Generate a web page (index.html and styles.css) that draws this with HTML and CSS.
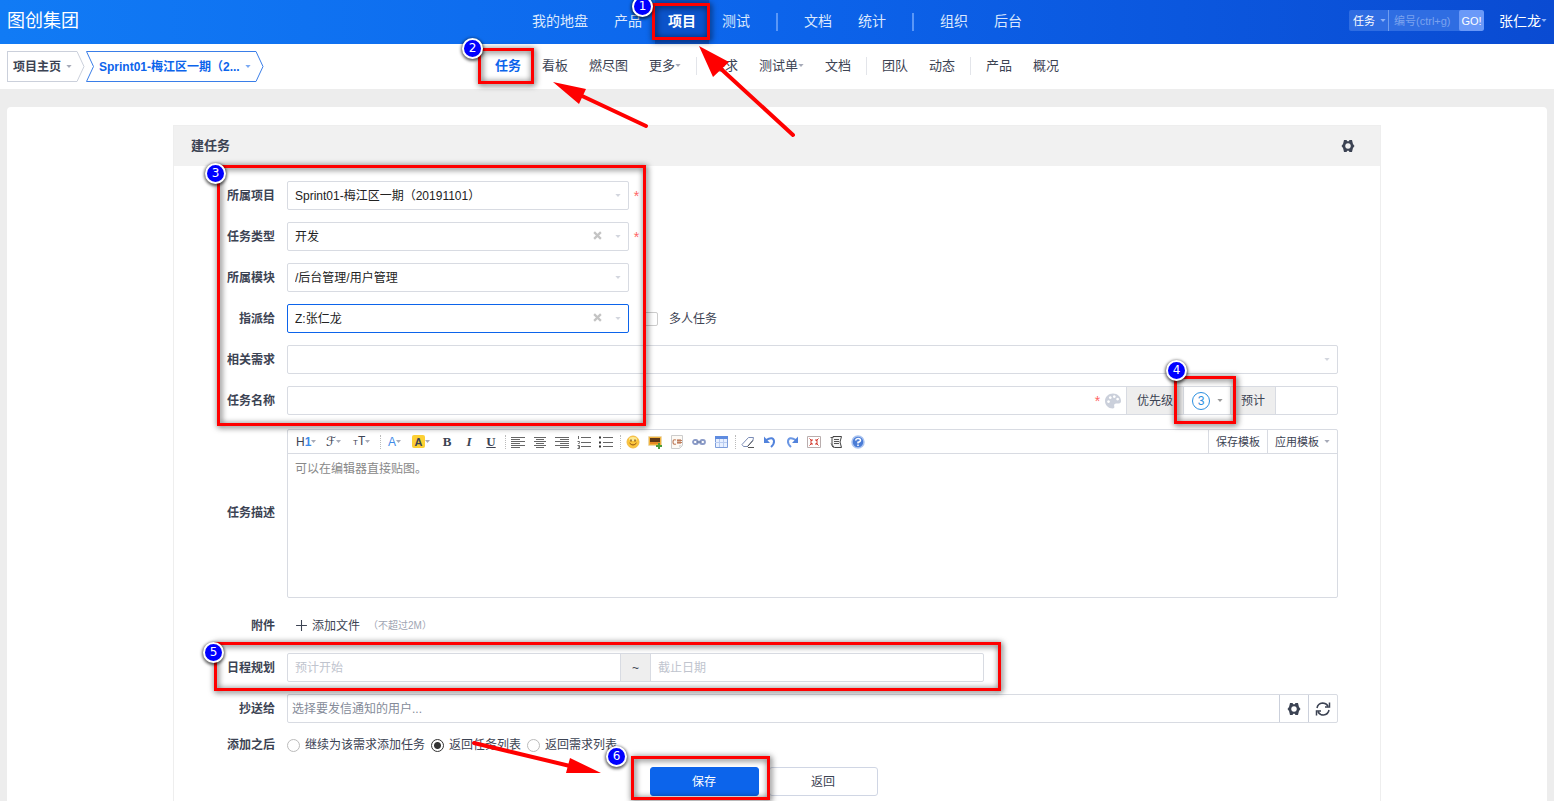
FILE: index.html
```html
<!DOCTYPE html>
<html lang="zh-CN">
<head>
<meta charset="utf-8">
<title>建任务</title>
<link rel="stylesheet" href="styles.css">
</head>
<body>
<svg class="defs" aria-hidden="true">
  <symbol id="caret" viewBox="0 0 7 4"><path d="M0 0h7L3.500 4z" fill="currentColor"/></symbol>
  <symbol id="gear" viewBox="0 0 14 14"><path fill="currentColor" fill-rule="evenodd" d="M3 1h2.500l.8 1.200h1.400L8.500 1H11l.6 2.400.4 1.600L13.500 7 12 9l-.4 1.600L11 13H8.500l-.8-1.200H6.300L5.500 13H3l-.6-2.400L2 9 .5 7 2 5l.4-1.600zM7 4.200a2.800 2.800 0 1 0 .01 0z"/></symbol>
</svg>

<header class="topbar">
  <h1 class="brand">图创集团</h1>
  <nav class="topnav">
    <a href="#">我的地盘</a>
    <a href="#">产品</a>
    <a href="#" class="active">项目</a>
    <a href="#">测试</a>
    <i class="rule"></i>
    <a href="#">文档</a>
    <a href="#">统计</a>
    <i class="rule"></i>
    <a href="#">组织</a>
    <a href="#">后台</a>
  </nav>
  <div class="tools">
    <form class="search">
      <select aria-label="搜索类型"><option>任务</option></select>
      <svg class="caret"><use href="#caret"/></svg>
      <input type="text" aria-label="编号" placeholder="编号(ctrl+g)">
      <button type="button">GO!</button>
    </form>
    <a href="#" class="user">张仁龙<svg class="caret"><use href="#caret"/></svg></a>
  </div>
</header>

<div class="subbar">
  <div class="crumbs">
    <a href="#" class="crumb">
      <span class="crumb-body first">项目主页<svg class="caret"><use href="#caret"/></svg></span>
      <svg class="crumb-end" viewBox="0 0 8 31"><path d="M0 .5L7 15.500L0 30.500"/></svg>
    </a>
    <a href="#" class="crumb current">
      <svg class="crumb-end" viewBox="0 0 8 31"><path d="M8 .5H.5L7.500 15.500L.5 30.500H8"/></svg>
      <span class="crumb-body">Sprint01-梅江区一期（2...<svg class="caret"><use href="#caret"/></svg></span>
      <svg class="crumb-end" viewBox="0 0 8 31"><path d="M0 .5L7 15.500L0 30.500"/></svg>
    </a>
  </div>
  <nav class="subnav">
    <a href="#" class="active">任务</a>
    <a href="#">看板</a>
    <a href="#">燃尽图</a>
    <a href="#">更多<svg class="caret"><use href="#caret"/></svg></a>
    <i class="rule"></i>
    <a href="#">需求</a>
    <a href="#">测试单<svg class="caret"><use href="#caret"/></svg></a>
    <a href="#">文档</a>
    <i class="rule"></i>
    <a href="#">团队</a>
    <a href="#">动态</a>
    <i class="rule"></i>
    <a href="#">产品</a>
    <a href="#">概况</a>
  </nav>
</div>

<main class="page">
  <section class="panel">
    <header class="panel-head">
      <h2>建任务</h2>
      <button type="button" class="icon-btn" aria-label="设置"><svg class="gear"><use href="#gear"/></svg></button>
    </header>
    <form class="form">
      <label for="project">所属项目</label>
      <div class="line">
        <div class="box third"><select id="project"><option>Sprint01-梅江区一期（20191101）</option></select><svg class="caret"><use href="#caret"/></svg></div>
        <span class="star">*</span>
      </div>

      <label for="type">任务类型</label>
      <div class="line">
        <div class="box third"><select id="type"><option>开发</option></select><button type="button" class="clear" aria-label="清除"><svg viewBox="0 0 8 8"><path d="M1 1l6 6M7 1L1 7"/></svg></button><svg class="caret"><use href="#caret"/></svg></div>
        <span class="star">*</span>
      </div>

      <label for="module">所属模块</label>
      <div class="line">
        <div class="box third"><select id="module"><option>/后台管理/用户管理</option></select><svg class="caret"><use href="#caret"/></svg></div>
      </div>

      <label for="assigned">指派给</label>
      <div class="line">
        <div class="box third focus"><select id="assigned"><option>Z:张仁龙</option></select><button type="button" class="clear" aria-label="清除"><svg viewBox="0 0 8 8"><path d="M1 1l6 6M7 1L1 7"/></svg></button><svg class="caret"><use href="#caret"/></svg></div>
        <label class="multi"><input type="checkbox">多人任务</label>
      </div>

      <label for="story">相关需求</label>
      <div class="line">
        <div class="box grow"><select id="story"><option></option></select><svg class="caret"><use href="#caret"/></svg></div>
      </div>

      <label for="name">任务名称</label>
      <div class="box group">
        <input type="text" id="name">
        <span class="star">*</span>
        <button type="button" class="palette" aria-label="颜色"><svg viewBox="0 0 16 16"><path fill="#cbd0db" fill-rule="evenodd" d="M8 0.500C3.500.5 0 3.800 0 8c0 4.300 3.500 7.500 7.600 7.500 1.400 0 2-.9 1.700-2-.5-1.700.2-3 2-3h2.500c1.500 0 2.200-1 2.200-2.500C16 3.800 12.500.5 8 .5zM3.500 7.200a1.400 1.400 0 1 0 .01 0zM5.300 3.200a1.400 1.400 0 1 0 .01 0zM9.300 2.200a1.400 1.400 0 1 0 .01 0zM12.600 4.700a1.400 1.400 0 1 0 .01 0z"/></svg></button>
        <label class="addon" for="pri">优先级</label>
        <span class="pri"><select id="pri"><option>3</option></select><svg class="caret"><use href="#caret"/></svg></span>
        <label class="addon" for="estimate">预计</label>
        <input type="text" id="estimate" class="estimate">
      </div>

      <label for="desc">任务描述</label>
      <div class="editor">
        <div class="toolbar">
          <div class="icons">
            <button type="button" class="w24" aria-label="标题"><span>H<b class="blue">1</b></span><svg class="caret"><use href="#caret"/></svg></button>
            <button type="button" class="w21" aria-label="字体"><span class="script">ℱ</span><svg class="caret"><use href="#caret"/></svg></button>
            <button type="button" class="w21" aria-label="字号"><span><small>T</small>T</span><svg class="caret"><use href="#caret"/></svg></button>
            <i class="dots"></i>
            <button type="button" class="w21 color" aria-label="文字颜色"><span class="blue">A</span><svg class="caret"><use href="#caret"/></svg></button>
            <button type="button" class="w21" aria-label="背景色"><span class="mark">A</span><svg class="caret"><use href="#caret"/></svg></button>
            <button type="button" aria-label="粗体"><b class="serif">B</b></button>
            <button type="button" aria-label="斜体"><b class="serif italic">I</b></button>
            <button type="button" aria-label="下划线"><b class="serif under">U</b></button>
            <i class="dots"></i>
            <button type="button" aria-label="左对齐"><svg viewBox="0 0 16 16"><path class="ink" d="M1 3.500h14M1 5.500h9M1 7.500h14M1 9.500h9M1 11.500h14M1 13.500h9"/></svg></button>
            <button type="button" aria-label="居中"><svg viewBox="0 0 16 16"><path class="ink" d="M2 3.500h12M4 5.500h8M2 7.500h12M4 9.500h8M2 11.500h12M4 13.500h8"/></svg></button>
            <button type="button" aria-label="右对齐"><svg viewBox="0 0 16 16"><path class="ink" d="M1 3.500h14M6 5.500h9M1 7.500h14M6 9.500h9M1 11.500h14M6 13.500h9"/></svg></button>
            <button type="button" aria-label="编号列表"><svg viewBox="0 0 16 16"><path class="ink" d="M5 3.500h10M5 8.500h10M5 12.500h10M2.500 2v3M1.500 7.500h2v1l-1 1h1M1.500 11.500h2v3h-2M2 13h1.500"/></svg></button>
            <button type="button" aria-label="项目列表"><svg viewBox="0 0 16 16"><path class="ink" d="M5 3.500h10M5 8.500h10M5 12.500h10"/><path fill="#333" d="M1 2.500h2v2H1zM1 7.500h2v2H1zM1 11.500h2v2H1z"/></svg></button>
            <i class="dots"></i>
            <button type="button" aria-label="表情"><svg viewBox="0 0 16 16"><circle cx="8" cy="8" r="6" fill="#fbc53b" stroke="#f3bb45"/><ellipse cx="8" cy="5" rx="4" ry="2" fill="#fde993"/><path d="M6 5.500v2M10 5.500v2" stroke="#7a4a10" stroke-width="1.300"/><path d="M4.500 9q3.500 4 7 0" fill="none" stroke="#8e4f12"/></svg></button>
            <button type="button" aria-label="图片"><svg viewBox="0 0 16 16"><path fill="#f3b43f" d="M2 3h12v9H2z"/><path fill="#5e3918" d="M3 4h10v4H3z"/><path fill="#e58a24" d="M3 8h10v2H3z"/><path fill="none" stroke="#ecd9ae" d="M1.500 2.500h13v9h-13z"/><path stroke="#4b9c39" stroke-width="2" d="M9 12h6M12 9v6"/></svg></button>
            <button type="button" aria-label="代码"><svg viewBox="0 0 16 16"><path fill="#fdfaf5" stroke="#ccc" d="M2.500 1.500h11v10l-3 3h-8z"/><path fill="none" stroke="#bf7c5b" stroke-width="1.200" d="M7 6q-3-1-3 2t3 2M9 5v5M11 5v5M8 6.500h5M8 8.500h5"/><path fill="#ddd" d="M10 14v-3h3z"/></svg></button>
            <button type="button" aria-label="链接"><svg viewBox="0 0 16 16"><g fill="none" stroke="#8c9cc8" stroke-width="1.800"><rect x="2" y="6" width="5" height="4" rx="2"/><rect x="9" y="6" width="5" height="4" rx="2"/></g><path stroke="#62749f" d="M5 8h6"/></svg></button>
            <button type="button" aria-label="表格"><svg viewBox="0 0 16 16"><path fill="#e8f0ff" stroke="#7d9ddb" d="M2.500 2.500h12v11h-12z"/><path fill="#5f8ce0" d="M2 2h13v3H2z"/><path stroke="#b9ccf0" d="M2 8.500h12M6.500 5v8M10.500 5v8"/></svg></button>
            <i class="dots"></i>
            <button type="button" aria-label="清除格式"><svg viewBox="0 0 16 16"><path fill="#fff" stroke="#7b8cb6" d="M2 10.500L8.500 3.500h5L13 6l-5.500 6.500H3.500z"/><path stroke="#555" d="M8 13.500h6M7.500 12.500L13 6.500"/></svg></button>
            <button type="button" aria-label="撤销"><svg viewBox="0 0 16 16"><path fill="none" stroke="#5283dc" stroke-width="2" d="M4 6q7-4 8 1 .4 3-3 6"/><path fill="#5283dc" d="M2 2.500v6.500h6z"/></svg></button>
            <button type="button" aria-label="重做"><svg viewBox="0 0 16 16"><path fill="none" stroke="#6b97e4" stroke-width="2" d="M12 6Q5 2 4 7q-.4 3 3 6"/><path fill="#5283dc" d="M14 2.500v6.500H8z"/></svg></button>
            <button type="button" aria-label="全屏"><svg viewBox="0 0 16 16"><path fill="#fff" stroke="#b9aeae" d="M1.500 2.500h13v11h-13z"/><path stroke="#d33c30" fill="none" d="M3.500 4.500L6 7M12.500 4.500L10 7M3.500 11.500L6 9M12.500 11.500L10 9M6 5v2H4M10 5v2h2M6 11V9H4M10 11V9h2"/></svg></button>
            <button type="button" aria-label="源码"><svg viewBox="0 0 16 16"><path fill="#f5f5f5" stroke="#444" d="M4 4.500l1-2h8.500L12 8l1.500 5.500h-7q-2 0-2.500-2z"/><path stroke="#555" fill="none" d="M2.500 3.500h3M6 5.500h5M6 7.500h5M6 9.500h5M3 9.500l3 3.500"/></svg></button>
            <button type="button" aria-label="关于"><svg viewBox="0 0 16 16"><circle cx="8" cy="8" r="6" fill="#4a7cd6" stroke="#a9c3f0" stroke-width="1.500"/><path fill="none" stroke="#fff" stroke-width="1.500" d="M5.500 6.500q.5-2 2.500-2 2.500 0 2.500 1.800Q10.500 8 8 8.200v1.300M8 10.500V12"/></svg></button>
          </div>
          <button type="button" class="tpl">保存模板</button>
          <button type="button" class="tpl">应用模板<svg class="caret"><use href="#caret"/></svg></button>
        </div>
        <textarea id="desc" placeholder="可以在编辑器直接贴图。"></textarea>
      </div>

      <label for="file">附件</label>
      <div class="line attach">
        <button type="button" id="file" class="add"><svg viewBox="0 0 12 12"><path d="M6 1v10M1 6h10"/></svg>添加文件</button>
        <small>（不超过2M）</small>
      </div>

      <label for="begin">日程规划</label>
      <div class="box dates">
        <input type="text" id="begin" placeholder="预计开始">
        <span class="addon tilde">~</span>
        <input type="text" aria-label="截止日期" placeholder="截止日期">
      </div>

      <label for="mail">抄送给</label>
      <div class="box mail">
        <input type="text" id="mail" placeholder="选择要发信通知的用户...">
        <button type="button" aria-label="设置"><svg class="gear"><use href="#gear"/></svg></button>
        <button type="button" aria-label="刷新"><svg class="refresh" viewBox="0 0 16 16"><path d="M2 7q.8-4.500 5.500-5 3.500 0 5.500 3M14 9q-.8 4.500-5.500 5-3.500 0-5.500-3M14.500 1.500v4.500H10M1.500 14.500V10H6"/></svg></button>
      </div>

      <span class="caption">添加之后</span>
      <div class="line radios">
        <label><input type="radio" name="after">继续为该需求添加任务</label>
        <label><input type="radio" name="after" checked>返回任务列表</label>
        <label><input type="radio" name="after">返回需求列表</label>
      </div>

      <div class="actions">
        <button type="button" class="primary">保存</button>
        <button type="button">返回</button>
      </div>
    </form>
  </section>
</main>

<div class="notes">
  <div class="frame f1"></div><div class="frame f2"></div><div class="frame f3"></div>
  <div class="frame f4"></div><div class="frame f5"></div><div class="frame f6"></div>
  <svg class="arrows" viewBox="0 0 1554 801">
    <g stroke="#f00" stroke-width="4" stroke-linecap="round"><path d="M720 68L793 135M580 95L646 126M474 743L570 766"/></g>
    <g fill="#f00"><path d="M699 46L729 62L713 77zM553 82L586 89L579 104zM601 773L570 758L566 773z"/></g>
  </svg>
  <span class="badge b1">1</span><span class="badge b2">2</span><span class="badge b3">3</span>
  <span class="badge b4">4</span><span class="badge b5">5</span><span class="badge b6">6</span>
</div>
</body>
</html>
```

FILE: styles.css
```css
* { box-sizing: border-box; }
body {
  margin: 0;
  min-height: 100vh;
  display: flex;
  flex-direction: column;
  position: relative;
  background: #ededed;
  color: #3c4353;
  font: 12px/20px "Liberation Sans", "Noto Sans CJK SC", sans-serif;
}
h1, h2 { margin: 0; font-weight: normal; }
a { color: inherit; text-decoration: none; }
button, input, select, textarea {
  margin: 0;
  padding: 0;
  border: 0;
  background: none;
  color: inherit;
  font: inherit;
  outline: 0;
  min-width: 0;
  border-radius: 0;
}
select { appearance: none; }
.defs { position: absolute; width: 0; height: 0; }
.caret { width: 6px; height: 3px; color: #a6aab8; flex: none; }

/* top bar */
.topbar {
  display: grid;
  grid-template-columns: 1fr auto 1fr;
  align-items: center;
  height: 44px;
  padding: 0 7px;
  background: linear-gradient(90deg, #117bf5, #0c64eb 50%, #0a4bd2);
  color: #fff;
}
.brand { font-size: 18px; line-height: 40px; padding-bottom: 2px; }
.topnav { display: flex; align-items: center; gap: 26px; font-size: 14px; color: #dbe8fd; }
.topnav a { line-height: 42px; padding-bottom: 2px; }
.topnav .active { color: #fff; font-weight: bold; background: #0b53ca; margin: 0 -13px; padding: 0 13px 2px; }
.topnav .rule { width: 2px; height: 18px; background: #5a97f7; }
.tools { display: flex; justify-content: flex-end; align-items: center; gap: 15px; padding-bottom: 3px; }
.search { display: flex; align-items: center; height: 21px; background: #2f6de2; border-radius: 2px; overflow: hidden; }
.search select { width: 30px; padding-left: 4px; font-size: 11px; height: 21px; }
.search .caret { margin: 0 2px 0 1px; color: #8fb2f5; }
.search input { width: 71px; height: 21px; border-left: 1px solid #6f9df0; padding-left: 5px; font-size: 11px; }
.search input::placeholder { color: #7ba2ee; }
.search button { width: 25px; height: 21px; background: #6a99f8; font-size: 11px; border-radius: 2px; }
.user { display: flex; align-items: center; font-size: 14px; }
.user .caret { color: #8fb2f5; }

/* second bar */
.subbar {
  display: grid;
  grid-template-columns: 1fr auto 1fr;
  align-items: center;
  height: 45px;
  padding: 0 7px;
  background: #fff;
}
.crumbs { display: flex; gap: 1px; font-weight: bold; white-space: nowrap; }
.crumb { display: flex; color: #3c4353; }
.crumb-body {
  display: flex;
  align-items: center;
  gap: 5px;
  height: 31px;
  padding: 0 5px;
  border: solid #cbd0db;
  border-width: 1px 0;
}
.crumb-body.first { border-left-width: 1px; }
.crumb-end { width: 8px; height: 31px; fill: none; stroke: #cbd0db; }
.current { color: #0c64eb; }
.current .crumb-body { border-color: #3a7ee8; }
.current .crumb-end { stroke: #3a7ee8; }
.current .caret { color: #7aa9f3; }
.subnav { display: flex; align-items: center; gap: 21px; font-size: 13px; padding-bottom: 2px; }
.subnav a { display: flex; align-items: center; }
.subnav .active { color: #0c64eb; font-weight: bold; }
.subnav .rule { width: 1px; height: 18px; margin: 0 -6px; background: #e3e5ea; }

/* panel */
.page {
  flex: 1;
  display: flex;
  justify-content: center;
  margin: 18px 7px 0;
  padding: 18px 18px 0;
  background: #fff;
  border-radius: 4px 4px 0 0;
}
.panel { width: 100%; max-width: 1208px; border: solid #eee; border-width: 1px 1px 0; }
.panel-head {
  display: flex;
  justify-content: space-between;
  align-items: center;
  height: 40px;
  padding: 0 25px 0 17px;
  background: #f1f1f1;
}
.panel-head h2 { font-size: 13px; font-weight: bold; }
.icon-btn { display: flex; }
.gear { width: 14px; height: 14px; }
.form {
  display: grid;
  grid-template-columns: 101px minmax(0, 1fr);
  gap: 12px;
  align-items: center;
  padding: 15px 42px 0 0;
}
.form > label, .caption { text-align: right; font-weight: bold; }
.line { display: flex; align-items: center; min-height: 29px; }
.box { display: flex; align-items: center; height: 29px; border: 1px solid #d8dbe2; border-radius: 2px; }
.box select, .box input { flex: 1; height: 27px; padding: 0 7px; color: #222; }
.box .caret { margin: 0 7px; color: #d3d6de; }
.third { width: 33%; max-width: 342px; }
.grow { flex: 1; }
.focus { border-color: #0c64eb; }
.clear { display: flex; margin-right: 6px; padding: 0 0 2px; }
.clear svg { width: 9px; height: 9px; stroke: #c4c4c4; stroke-width: 2; }
.star { width: 15px; text-align: center; color: #f66; font-size: 14px; line-height: 14px; }
.multi { display: flex; align-items: center; gap: 11px; margin-left: 15px; }
.multi input { appearance: none; width: 14px; height: 14px; border: 1px solid #ccc; border-radius: 2px; }
.palette { display: flex; margin-right: 5px; }
.palette svg { width: 16px; height: 16px; }
.addon {
  height: 27px;
  line-height: 28px;
  padding: 0 10px;
  background: #eee;
  border: solid #d8dbe2;
  border-width: 0 1px;
}
.pri { display: flex; align-items: center; padding-left: 8px; }
.box .pri select {
  flex: none;
  width: 18px;
  height: 18px;
  padding: 0;
  border: 1px solid #2b8fe0;
  border-radius: 50%;
  color: #2b8fe0;
  line-height: 16px;
  text-align: center;
  text-align-last: center;
}
.pri .caret { color: #999; }
.box .estimate { flex: none; width: 61px; }

/* editor */
.editor { display: flex; flex-direction: column; height: 169px; margin-top: 2px; border: 1px solid #d8dbe2; border-radius: 2px; }
.toolbar { display: flex; height: 24px; border-bottom: 1px solid #d8dbe2; }
.icons { flex: 1; display: flex; align-items: center; gap: 6px; padding-left: 8px; }
.icons button { display: flex; align-items: center; justify-content: center; width: 16px; height: 22px; font-size: 12px; line-height: 14px; }
.icons button > svg:not(.caret) { width: 16px; height: 16px; }
.icons .w24, .icons .w21 { justify-content: flex-start; }
.icons .w24 { width: 24px; }
.icons .w21 { width: 21px; }
.icons .color { padding-left: 3px; }
.icons .caret { width: 5px; }
.icons small { font-size: 8px; }
.dots { height: 14px; border-left: 1px dotted #bbb; margin-right: -2px; }
.blue { color: #3f8be8; }
.mark { width: 13px; height: 13px; background: #fdd034; border-radius: 2px; font-weight: bold; font-size: 11px; text-align: center; }
.script { font-family: "DejaVu Sans", sans-serif; font-size: 13px; }
.serif { font-family: "Liberation Serif", serif; font-size: 13px; }
.italic { font-style: italic; }
.under { text-decoration: underline; }
.ink { fill: none; stroke: #666; }
.tpl { display: flex; align-items: center; gap: 5px; padding: 0 7px; border-left: 1px solid #d8dbe2; font-size: 11px; }
.editor textarea { flex: 1; padding: 5px 7px; resize: none; }
textarea::placeholder { color: #888; }

.attach { min-height: 31px; gap: 8px; }
.add { display: flex; align-items: center; gap: 4px; padding-left: 8px; }
.add svg { width: 13px; height: 13px; stroke: #3c4353; }
.attach small { font-size: 10px; color: #a0a5b3; }
.dates { width: 67%; max-width: 697px; }
.dates input::placeholder { color: #c0c4ce; }
.tilde { padding: 0 11px; }
.mail input { padding: 0 4px; }
.mail input::placeholder { color: #858b99; }
.mail button { display: flex; align-items: center; justify-content: center; width: 29px; height: 27px; border-left: 1px solid #cbd0db; }
.refresh { width: 16px; height: 16px; fill: none; stroke: #3c4353; stroke-width: 1.500; }
.radios { min-height: 20px; gap: 6px; }
.radios label { display: flex; align-items: center; gap: 5px; }
.radios input { appearance: none; width: 13px; height: 13px; border: 1px solid #bbb; border-radius: 50%; }
.radios input:checked { border-color: #333; background: radial-gradient(#333 0 3px, #fff 4px); }
.actions { grid-column: 1 / -1; display: flex; justify-content: center; gap: 10px; padding-left: 15px; }
.actions button { width: 109px; height: 29px; border: 1px solid #d0d6e4; border-radius: 3px; }
.actions .primary { background: #0c64eb; border-color: #0c64eb; color: #fff; }

/* numbered callouts drawn over the page */
.notes { position: absolute; top: 0; left: 0; pointer-events: none; }
.arrows { position: absolute; top: 0; left: 0; width: 1554px; height: 801px; }
.frame { position: absolute; border: 3px solid #f00; filter: drop-shadow(1px 1px 3px rgba(0, 0, 0, .8)); }
.badge {
  position: absolute;
  width: 21px;
  height: 21px;
  border: 2px solid #fff;
  border-radius: 50%;
  background: #00f;
  box-shadow: 0 1px 3px 1px rgba(0, 0, 0, .6);
  color: #fff;
  font: 12px/17px "DejaVu Sans", sans-serif;
  text-align: center;
}
.f1 { left: 652px; top: 3px; width: 58px; height: 37px; }
.f2 { left: 478px; top: 48px; width: 56px; height: 36px; }
.f3 { left: 217px; top: 165px; width: 429px; height: 261px; }
.f4 { left: 1174px; top: 376px; width: 62px; height: 48px; }
.f5 { left: 214px; top: 642px; width: 787px; height: 49px; }
.f6 { left: 631px; top: 756px; width: 139px; height: 44px; }
.b1 { left: 632px; top: -4px; }
.b2 { left: 462px; top: 38px; }
.b3 { left: 205px; top: 163px; }
.b4 { left: 1166px; top: 360px; }
.b5 { left: 203px; top: 642px; }
.b6 { left: 606px; top: 746px; }
```
